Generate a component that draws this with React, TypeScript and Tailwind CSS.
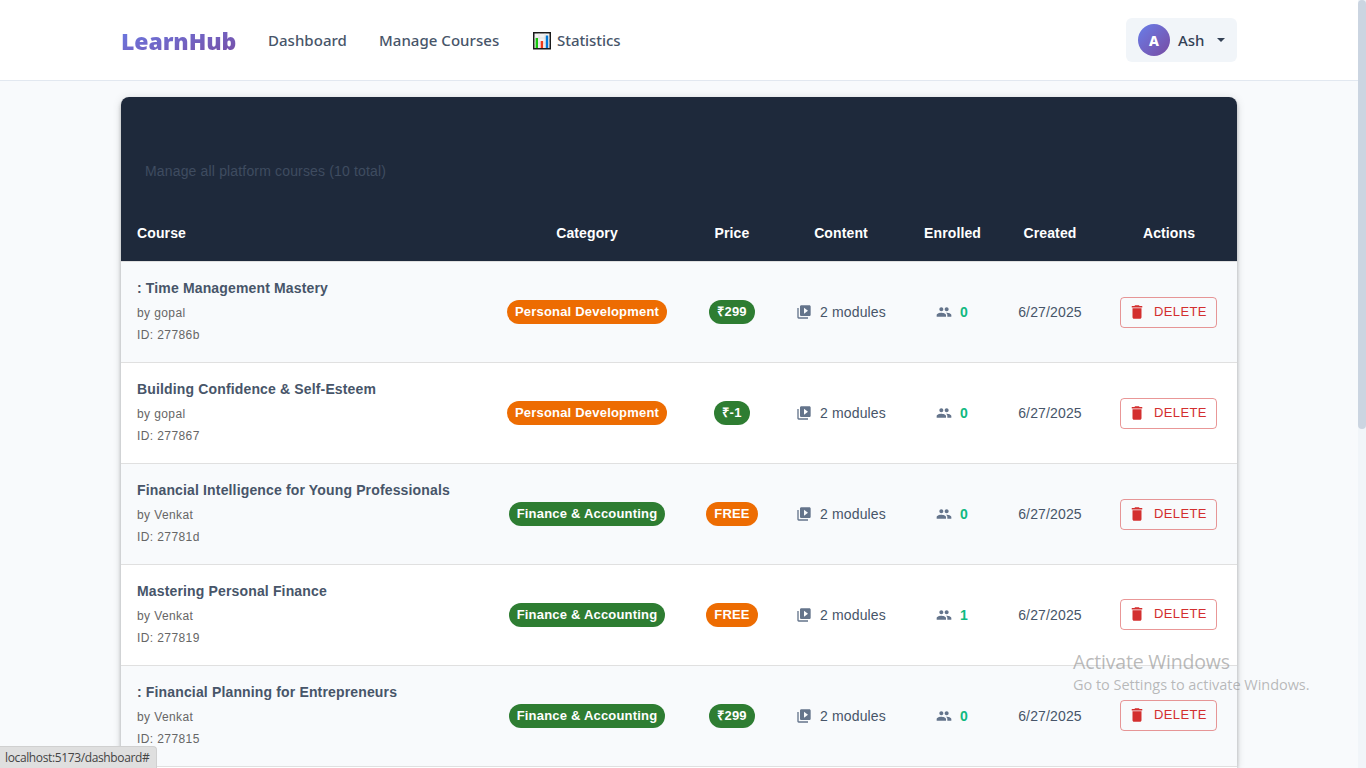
import { MdDelete, MdPeople, MdVideoLibrary } from "react-icons/md";

type Course = {
  title: string;
  author: string;
  id: string;
  category: "Personal Development" | "Finance & Accounting";
  price: string;
  enrolled: number;
};

const courses: Course[] = [
  { title: ": Time Management Mastery", author: "gopal", id: "27786b", category: "Personal Development", price: "₹299", enrolled: 0 },
  { title: "Building Confidence & Self-Esteem", author: "gopal", id: "277867", category: "Personal Development", price: "₹-1", enrolled: 0 },
  { title: "Financial Intelligence for Young Professionals", author: "Venkat", id: "27781d", category: "Finance & Accounting", price: "FREE", enrolled: 0 },
  { title: "Mastering Personal Finance", author: "Venkat", id: "277819", category: "Finance & Accounting", price: "FREE", enrolled: 1 },
  { title: ": Financial Planning for Entrepreneurs", author: "Venkat", id: "277815", category: "Finance & Accounting", price: "₹299", enrolled: 0 },
];

const columns = "grid grid-cols-[370px_192px_98px_120px_102px_94px_140px] items-center";

function Chip({ label, color }: { label: string; color: "orange" | "green" }) {
  return (
    <span
      className={`inline-flex h-6 items-center justify-center rounded-full px-2 pb-px text-[13px] font-bold tracking-[0.2px] whitespace-nowrap text-white ${
        label.startsWith("₹") ? "min-w-9" : ""
      } ${color === "orange" ? "bg-[#ed6c02]" : "bg-[#2e7d32]"}`}
    >
      {label}
    </span>
  );
}

function ChartEmoji() {
  return (
    <svg width="18" height="18" viewBox="0 0 18 18" className="mt-px shrink-0">
      <rect x="0.75" y="0.75" width="16.5" height="16" fill="#f2f2f2" stroke="#1b1b1b" strokeWidth="1.5" />
      <path d="M6 1.5v14.5M12 1.5v14.5M1.5 6h15M1.5 11h15" stroke="#dcdcdc" strokeWidth="0.7" />
      <rect x="2.6" y="6" width="2.4" height="10" fill="#16c60c" />
      <rect x="7.7" y="9" width="2.4" height="7" fill="#f03a17" />
      <rect x="12.8" y="3.5" width="2.4" height="12.5" fill="#0078d7" />
    </svg>
  );
}

function Navbar() {
  return (
    <header className="h-[81px] shrink-0 border-b border-[#e2e8f0] bg-white font-['Noto_Sans','Open_Sans',sans-serif]">
      <div className="mx-auto flex h-20 w-[1116px] items-center">
        <span className="w-[147px] bg-gradient-to-br from-[#667eea] to-[#764ba2] bg-clip-text pt-[2px] font-['Open_Sans','Noto_Sans',sans-serif] text-[23px] leading-9 font-extrabold tracking-[-0.1px] text-transparent [background-size:115px_100%] bg-no-repeat">
          LearnHub
        </span>
        <nav className="flex items-center text-[15px] font-medium tracking-[0.03px] text-[#475569]">
          <a className="w-[111px] whitespace-nowrap">Dashboard</a>
          <a className="w-[154px] whitespace-nowrap">Manage Courses</a>
          <a className="flex items-center gap-[6px]">
            <ChartEmoji />
            <span className="tracking-[-0.05px]">Statistics</span>
          </a>
        </nav>
        <button className="ml-auto flex h-11 w-[111px] items-center rounded-md bg-[#f1f5f9] pl-3">
          <span className="flex size-8 items-center justify-center rounded-full bg-gradient-to-br from-[#667eea] to-[#764ba2] text-[14px] font-extrabold text-white">
            A
          </span>
          <span className="ml-2 text-[15px] font-medium text-[#334155]">Ash</span>
          <svg width="8" height="4" viewBox="0 0 8 4" className="mr-3 ml-auto">
            <path d="M0 0h8L4 4z" fill="#334155" />
          </svg>
        </button>
      </div>
    </header>
  );
}

function CourseRow({ course, index }: { course: Course; index: number }) {
  return (
    <div className={`${columns} h-[101px] border-b border-[#e0e0e0] text-center ${index % 2 === 0 ? "bg-[#f8fafc]" : "bg-white"}`}>
      <div className="px-4 text-left">
        <div className="mb-[4px] text-[14px] leading-5 font-bold tracking-[0.15px] text-[#475569]">{course.title}</div>
        <div className="mb-px text-[12px] leading-[22px] tracking-[0.4px] text-[#666666]">
          <div>by {course.author}</div>
          <div>ID: {course.id}</div>
        </div>
      </div>
      <div className="flex justify-center">
        <Chip label={course.category} color={course.category === "Personal Development" ? "orange" : "green"} />
      </div>
      <div className="flex justify-center">
        <Chip label={course.price} color={course.price === "FREE" ? "orange" : "green"} />
      </div>
      <div className="flex items-center justify-center gap-2 text-[14px] tracking-[0.13px] text-[#475569]">
        <MdVideoLibrary size={16} color="#64748b" />
        <span>2 modules</span>
      </div>
      <div className="flex items-center justify-center gap-2 text-[14px] font-bold text-[#10b981]">
        <MdPeople size={16} color="#64748b" />
        <span>{course.enrolled}</span>
      </div>
      <div className="text-[14px] tracking-[0.15px] text-[#475569]">6/27/2025</div>
      <div className={`flex justify-center pl-[3px] ${index > 2 ? "pb-[2px]" : ""}`}>
        <button className="flex h-[31px] w-[97px] items-center gap-2 rounded border border-[#d32f2f]/50 pl-[7px] text-[13px] leading-[23px] tracking-[0.37px] text-[#d32f2f]">
          <MdDelete size={18} />
          <span className="-mt-[2px]">DELETE</span>
        </button>
      </div>
    </div>
  );
}

export default function App() {
  return (
    <div className="relative flex h-screen w-full overflow-hidden bg-[#f8fafc] font-['Liberation_Sans',Arial,sans-serif]">
      <div className="flex min-w-0 flex-1 flex-col">
        <Navbar />
        <main className="mx-auto mt-4 flex w-[1116px] flex-1 flex-col rounded-t-lg bg-white shadow-[0_2px_4px_-1px_rgba(0,0,0,0.2),0_4px_5px_0_rgba(0,0,0,0.14),0_1px_10px_0_rgba(0,0,0,0.12)]">
          <div className="rounded-t-lg border-b border-[#e0e0e0] bg-[#1e293b]">
            <div className="h-[108px] px-6 pt-16 text-[14px] leading-5 tracking-[0.16px] text-[#3f4c60]">
              Manage all platform courses (10 total)
            </div>
            <div className={`${columns} h-14 text-center text-[14px] leading-6 font-bold tracking-[0.12px] text-white`}>
              <div className="px-4 text-left">Course</div>
              <div>Category</div>
              <div>Price</div>
              <div>Content</div>
              <div className="pl-px">Enrolled</div>
              <div>Created</div>
              <div className="pl-[4px]">Actions</div>
            </div>
          </div>
          {courses.map((course, index) => (
            <CourseRow key={course.id} course={course} index={index} />
          ))}
        </main>
      </div>
      <div className="w-2 bg-[#f1f5f9]">
        <div className="h-[429px] rounded bg-[#cbd5e1]" />
      </div>
      <div className="absolute top-[651px] left-[1073px] font-['Open_Sans','Noto_Sans',sans-serif] whitespace-nowrap text-[#8c8c8c]/60">
        <div className="text-[19.5px] leading-[22px] tracking-[-0.2px]">Activate Windows</div>
        <div className="text-[14.5px] leading-[23px] tracking-[-0.03px]">Go to Settings to activate Windows.</div>
      </div>
      <div className="absolute bottom-0 left-0 h-[22px] w-[157px] rounded-tr border-t border-r border-[#d0d0d0] bg-[#dfdfdf] pl-[5px] font-['Open_Sans','Noto_Sans',sans-serif] text-[12px] leading-[21px] tracking-[-0.37px] whitespace-nowrap text-[#444444]">
        localhost:5173/dashboard#
      </div>
    </div>
  );
}
